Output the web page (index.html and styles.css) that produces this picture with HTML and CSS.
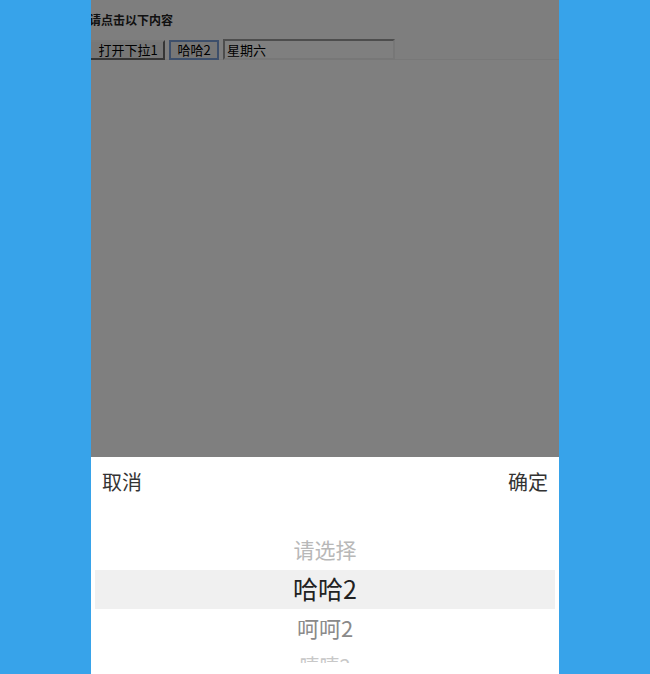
FILE: index.html
```html
<!DOCTYPE html>
<html lang="zh-CN">
<head>
<meta charset="utf-8">
<title>picker</title>
<link rel="stylesheet" href="styles.css">
</head>
<body>
<div class="page">
  <div class="top">
    <h4 class="title">请点击以下内容</h4>
    <div class="controls">
      <button class="btn">打开下拉1</button>
      <button class="btn btn-focus">哈哈2</button>
      <input class="field" type="text" value="星期六">
    </div>
  </div>
  <div class="mask"></div>
  <div class="picker">
    <div class="picker-head">
      <span class="act">取消</span>
      <span class="act">确定</span>
    </div>
    <div class="wheel">
      <div class="item item-top">请选择</div>
      <div class="item item-sel">哈哈2</div>
      <div class="item item-next">呵呵2</div>
      <div class="item item-far">嘻嘻2</div>
    </div>
  </div>
</div>
</body>
</html>
```
FILE: styles.css
```css
html, body {
  margin: 0;
  padding: 0;
  height: 100%;
}
body {
  background: #37a3ea;
  font-family: "Noto Sans CJK SC", "Noto Sans", sans-serif;
  overflow: hidden;
}
.page {
  position: relative;
  width: 468px;
  height: 674px;
  margin: 0 auto;
  background: #ffffff;
  overflow: hidden;
}
.top {
  height: 60px;
  border-bottom: 1px solid #f0f0f0;
  background: #fcfcfc;
  box-sizing: border-box;
}
.title {
  margin: 0;
  padding-top: 11px;
  height: 28px;
  box-sizing: border-box;
  font-size: 12px;
  line-height: 17px;
  font-weight: bold;
  color: #222;
  text-indent: -2px;
}
.controls {
  display: flex;
  align-items: center;
  gap: 4px;
  padding-top: 11px;
}
.btn {
  height: 20px;
  padding: 0 5px;
  margin: 0;
  font-family: "Noto Sans CJK SC", sans-serif;
  font-size: 13px;
  line-height: 16px;
  color: #000;
  background: #efefef;
  border: 2px solid;
  border-color: #f3f3f3 #6c6c6c #6c6c6c #f3f3f3;
}
.btn:first-child {
  width: 74px;
  border-left-width: 0;
  padding: 0 4px 0 6px;
}
.btn-focus {
  width: 50px;
  border: 2px solid #7a9fd6;
  padding: 0;
}
.field {
  width: 172px;
  height: 21px;
  box-sizing: border-box;
  margin: 0 0 1px;
  padding: 0 2px;
  font-family: "Noto Sans CJK SC", sans-serif;
  font-size: 13px;
  color: #000;
  border: 2px solid;
  border-color: #9a9a9a #eeeeee #eeeeee #9a9a9a;
  background: #fff;
}
.mask {
  position: absolute;
  inset: 0;
  background: rgba(0, 0, 0, 0.5);
}
.picker {
  position: absolute;
  left: 0;
  right: 0;
  bottom: 0;
  height: 217px;
  background: #fff;
}
.picker-head {
  display: flex;
  justify-content: space-between;
  align-items: center;
  height: 52px;
  padding: 0 11px 2px;
  box-sizing: border-box;
}
.act {
  font-size: 20px;
  color: #333;
  line-height: 26px;
}
.wheel {
  height: 154px;
  padding-top: 22px;
  box-sizing: border-box;
  overflow: hidden;
}
.item {
  height: 39px;
  margin: 0 4px;
  padding-bottom: 4px;
  box-sizing: border-box;
  display: flex;
  align-items: center;
  justify-content: center;
  font-size: 21px;
}
.item-top {
  color: #b8b8b8;
}
.item-sel {
  background: #f0f0f0;
  color: #222;
  font-size: 25px;
}
.item-next {
  color: #8a8a8a;
  font-size: 22px;
}
.item-far {
  color: #c8c8c8;
  font-size: 20px;
}
```
